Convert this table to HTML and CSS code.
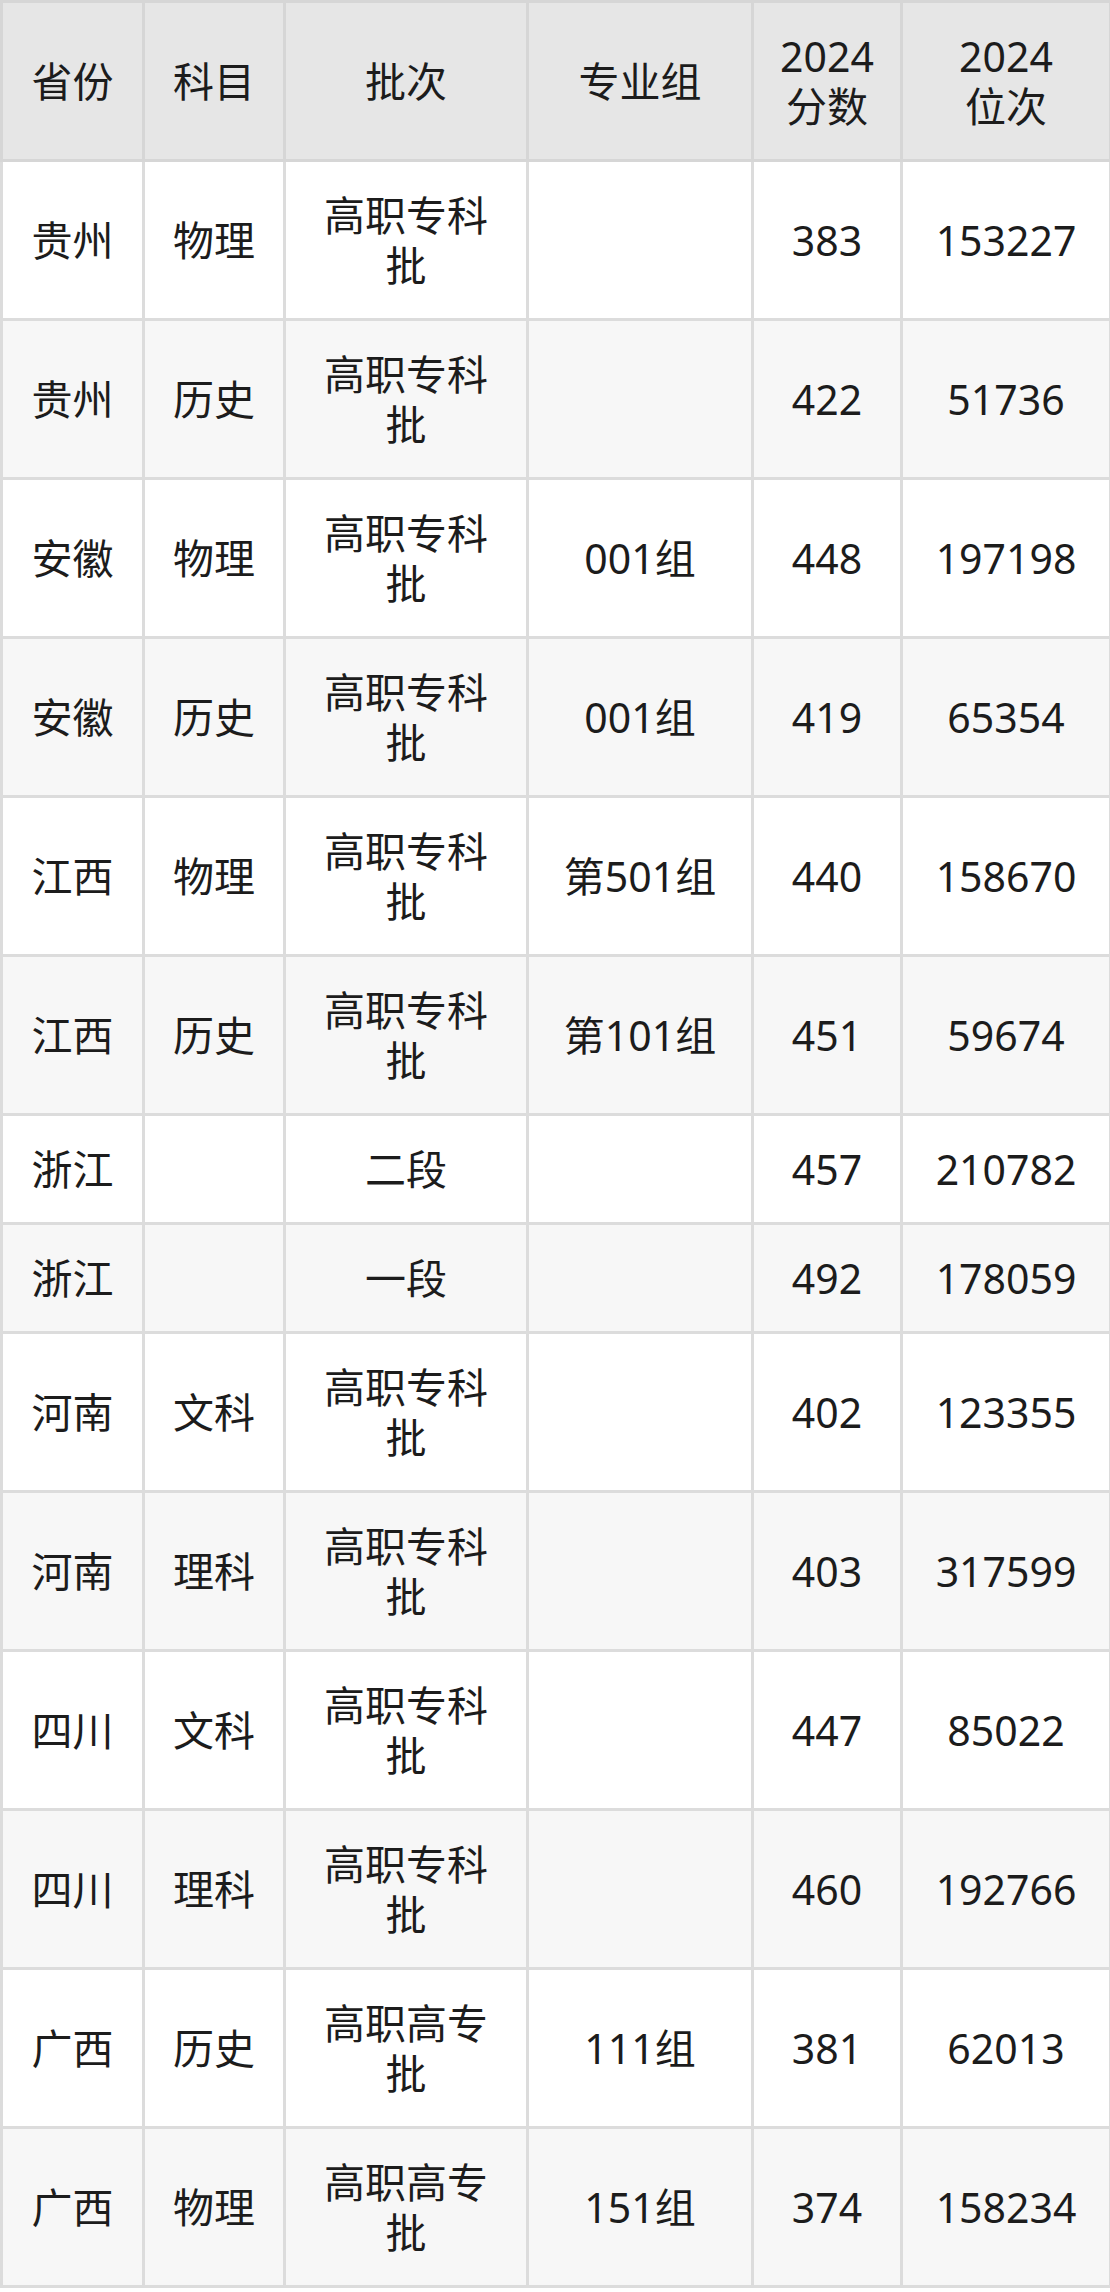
FILE: index.html
```html
<!DOCTYPE html>
<html lang="zh-CN">
<head>
<meta charset="utf-8">
<title>2024 分数位次</title>
<link rel="stylesheet" href="styles.css">
</head>
<body>
<table class="score-table">
  <colgroup>
    <col class="c1"><col class="c2"><col class="c3"><col class="c4"><col class="c5"><col class="c6">
  </colgroup>
  <thead>
    <tr><th>省份</th><th>科目</th><th>批次</th><th>专业组</th><th>2024<br>分数</th><th>2024<br>位次</th></tr>
  </thead>
  <tbody>
    <tr><td>贵州</td><td>物理</td><td>高职专科<br>批</td><td></td><td>383</td><td>153227</td></tr>
    <tr><td>贵州</td><td>历史</td><td>高职专科<br>批</td><td></td><td>422</td><td>51736</td></tr>
    <tr><td>安徽</td><td>物理</td><td>高职专科<br>批</td><td>001组</td><td>448</td><td>197198</td></tr>
    <tr><td>安徽</td><td>历史</td><td>高职专科<br>批</td><td>001组</td><td>419</td><td>65354</td></tr>
    <tr><td>江西</td><td>物理</td><td>高职专科<br>批</td><td>第501组</td><td>440</td><td>158670</td></tr>
    <tr><td>江西</td><td>历史</td><td>高职专科<br>批</td><td>第101组</td><td>451</td><td>59674</td></tr>
    <tr><td>浙江</td><td></td><td>二段</td><td></td><td>457</td><td>210782</td></tr>
    <tr><td>浙江</td><td></td><td>一段</td><td></td><td>492</td><td>178059</td></tr>
    <tr><td>河南</td><td>文科</td><td>高职专科<br>批</td><td></td><td>402</td><td>123355</td></tr>
    <tr><td>河南</td><td>理科</td><td>高职专科<br>批</td><td></td><td>403</td><td>317599</td></tr>
    <tr><td>四川</td><td>文科</td><td>高职专科<br>批</td><td></td><td>447</td><td>85022</td></tr>
    <tr><td>四川</td><td>理科</td><td>高职专科<br>批</td><td></td><td>460</td><td>192766</td></tr>
    <tr><td>广西</td><td>历史</td><td>高职高专<br>批</td><td>111组</td><td>381</td><td>62013</td></tr>
    <tr><td>广西</td><td>物理</td><td>高职高专<br>批</td><td>151组</td><td>374</td><td>158234</td></tr>
  </tbody>
</table>
</body>
</html>
```

FILE: styles.css
```css
html, body {
  margin: 0;
  padding: 0;
  background: #ffffff;
}

.score-table {
  width: 1109px;
  margin: 0;
  border-collapse: collapse;
  table-layout: fixed;
  font-family: "Noto Sans", "Noto Sans CJK SC", sans-serif;
  font-size: 41px;
  line-height: 50px;
  color: #1c1c1c;
}

.c1 { width: 142px; }
.c2 { width: 141px; }
.c3 { width: 243px; }
.c4 { width: 225px; }
.c5 { width: 149px; }
.c6 { width: 209px; }

.score-table th,
.score-table td {
  border: 3px solid #dcdcdc;
  padding: 28px 0;
  text-align: center;
  vertical-align: middle;
  font-weight: normal;
}

.score-table thead th {
  background: #e6e6e6;
  border-color: #d6d6d6;
}

.score-table tbody tr:nth-child(odd) td {
  background: #ffffff;
}

.score-table tbody tr:nth-child(even) td {
  background: #f7f7f7;
}
```
